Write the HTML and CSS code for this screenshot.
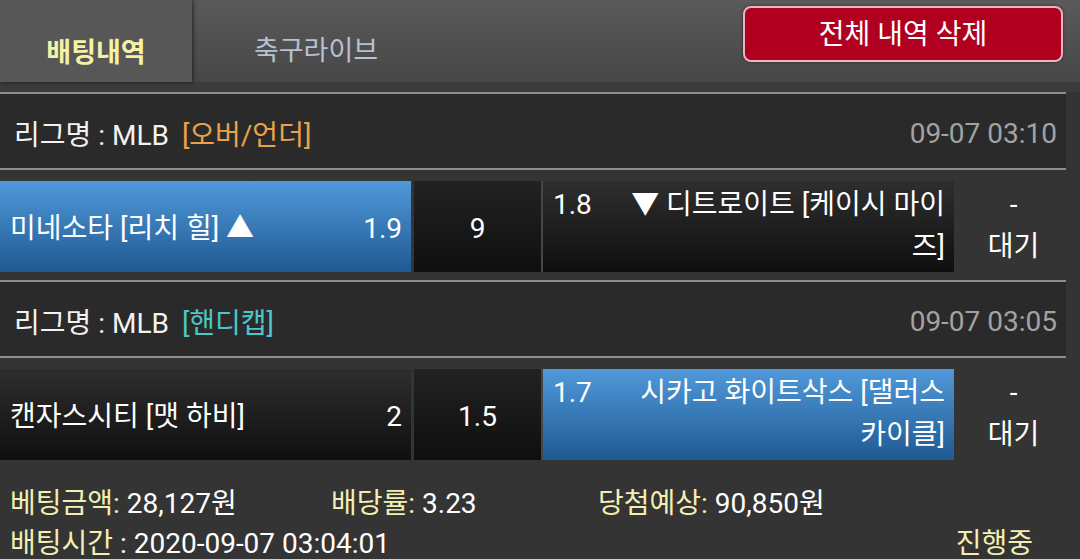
FILE: index.html
```html
<!DOCTYPE html>
<html>
<head>
    <meta charset="utf-8">
    <title>배팅내역</title>
    <link rel="stylesheet" href="styles.css">
</head>
<body>
    <div class="topbar">
        <div class="tab active">배팅내역</div>
        <div class="tab">축구라이브</div>
        <button class="delete-all">전체 내역 삭제</button>
    </div>
    <div class="topbar-gap"></div>

    <div class="bet">
        <div class="league">
            <div class="league-name">리그명 : MLB <span class="type over">[오버/언더]</span></div>
            <div class="league-time">09-07 03:10</div>
        </div>
        <div class="match">
            <div class="side home picked">
                <span class="team">미네소타 [리치 힐] ▲</span>
                <span class="odd">1.9</span>
            </div>
            <div class="draw">9</div>
            <div class="side away">
                <span class="odd">1.8</span>▼ 디트로이트 [케이시 마이즈]
            </div>
            <div class="status">-<br>대기</div>
        </div>
    </div>

    <div class="bet">
        <div class="league">
            <div class="league-name">리그명 : MLB <span class="type handi">[핸디캡]</span></div>
            <div class="league-time">09-07 03:05</div>
        </div>
        <div class="match">
            <div class="side home">
                <span class="team">캔자스시티 [맷 하비]</span>
                <span class="odd">2</span>
            </div>
            <div class="draw">1.5</div>
            <div class="side away picked">
                <span class="odd">1.7</span>시카고 화이트삭스 [댈러스 카이클]
            </div>
            <div class="status">-<br>대기</div>
        </div>
    </div>

    <div class="summary">
        <div class="summary-row">
            <div class="item"><span class="label">베팅금액:</span> 28,127원</div>
            <div class="item"><span class="label">배당률:</span> 3.23</div>
            <div class="item"><span class="label">당첨예상:</span> 90,850원</div>
        </div>
        <div class="summary-row second">
            <div class="item"><span class="label">배팅시간</span> : 2020-09-07 03:04:01</div>
            <div class="progress">진행중</div>
        </div>
    </div>
</body>
</html>
```

FILE: styles.css
```css
/* Reset */
* {
    margin: 0;
    padding: 0;
    box-sizing: border-box;
}

html, body {
    width: 100%;
    height: 100%;
    overflow: hidden;
    background-color: #343434;
    color: #ffffff;
    font-family: 'Roboto', 'Noto Sans CJK KR', sans-serif;
    font-size: 28px;
}

/* Top tabs */
.topbar {
    display: flex;
    height: 82px;
    background: linear-gradient(#5a5a5a, #474747);
}

.tab {
    width: 248px;
    padding-top: 32px;
    text-align: center;
    font-size: 27px;
    color: #b6c2d2;
    line-height: 38px;
}

.tab.active {
    width: 192px;
    padding-top: 34px;
    background: #575757;
    color: #f5f2a6;
    font-weight: bold;
    box-shadow: 1px 0 4px rgba(0,0,0,0.6);
}

.delete-all {
    margin: 6px 17px 0 auto;
    width: 320px;
    height: 56px;
    padding-bottom: 4px;
    background: #b1001f;
    color: #ffffff;
    border: 2px solid #e9b5bd;
    border-radius: 8px;
    font-family: 'Roboto', 'Noto Sans CJK KR', sans-serif;
    font-size: 28px;
    box-shadow: 0 0 3px rgba(0,0,0,0.5);
}

.topbar-gap {
    height: 10px;
    background: #3b3b3b;
}

/* League header */
.league {
    display: flex;
    justify-content: space-between;
    align-items: center;
    height: 78px;
    margin-right: 14px;
    padding: 4px 9px 0 14px;
    background: #2a2a2a;
    border-top: 2px solid #8d8d8d;
    border-bottom: 2px solid #8d8d8d;
}

.league-name {
    color: #f2f2f2;
}

.type {
    margin-left: 6px;
}

.type.over {
    color: #eaa24a;
}

.type.handi {
    color: #4cc6c6;
}

.league-time {
    color: #a2a2a2;
}

/* Match row */
.match {
    display: flex;
    height: 91px;
    margin: 11px 0 8px;
}

.side {
    width: 411px;
    background: linear-gradient(#2e2e2e, #0f0f0f);
    line-height: 42px;
}

.side.picked {
    background: linear-gradient(#5099da, #1f5992);
}

.home {
    display: flex;
    justify-content: space-between;
    align-items: center;
    padding: 4px 9px 0 10px;
}

.away {
    padding: 3px 9px 0 10px;
    text-align: right;
}

.away .odd {
    float: left;
    width: 62px;
    text-align: left;
}

.draw {
    width: 129px;
    margin-left: 3px;
    border-right: 2px solid #464646;
    background: linear-gradient(#222222, #0f0f0f);
    text-align: center;
    line-height: 95px;
}

.status {
    width: 119px;
    padding-top: 3px;
    text-align: center;
    line-height: 42px;
}

/* Summary */
.summary {
    padding: 16px 0 0 10px;
    line-height: 40px;
}

.summary-row {
    display: flex;
}

.summary-row .item:nth-child(1) {
    width: 321px;
}

.summary-row .item:nth-child(2) {
    width: 267px;
}

.summary-row.second {
    justify-content: space-between;
    padding-right: 47px;
}

.summary-row.second .item {
    width: auto;
}

.label,
.progress {
    color: #f3efb2;
}
```
